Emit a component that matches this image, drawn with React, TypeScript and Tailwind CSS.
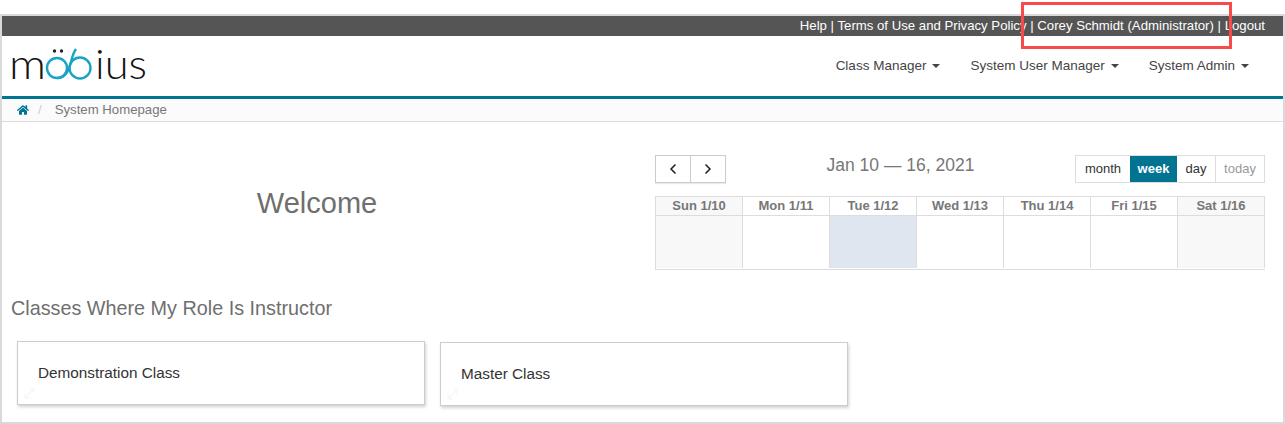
import { ChevronLeft, ChevronRight, MoveDiagonal } from "lucide-react";
import { FaHome } from "react-icons/fa";

const days = [
  { label: "Sun 1/10", cell: "bg-[#f8f8f8]", head: "bg-[#f8f8f8]" },
  { label: "Mon 1/11", cell: "bg-white", head: "bg-white" },
  { label: "Tue 1/12", cell: "bg-[#dfe6ef]", head: "bg-white" },
  { label: "Wed 1/13", cell: "bg-white", head: "bg-white" },
  { label: "Thu 1/14", cell: "bg-white", head: "bg-white" },
  { label: "Fri 1/15", cell: "bg-white", head: "bg-white" },
  { label: "Sat 1/16", cell: "bg-[#f8f8f8]", head: "bg-[#f8f8f8]" },
];

function Logo() {
  return (
    <svg width="143" height="60" viewBox="8 36 143 60" className="block">
      <text x="9" y="79" textLength="37" lengthAdjust="spacingAndGlyphs" fontFamily="Lato, sans-serif" fontWeight="300" fontSize="42" fill="#151515">m</text>
      <circle cx="54.500" cy="51" r="1.700" fill="#222" />
      <circle cx="61.500" cy="51" r="1.700" fill="#222" />
      <circle cx="57" cy="68" r="10" fill="none" stroke="#1ba3c6" strokeWidth="2.400" />
      <circle cx="80" cy="68" r="10.500" fill="none" stroke="#1ba3c6" strokeWidth="2.400" />
      <path d="M57 78C66 78 69 70 71 62C72 58 73 53 76 49" fill="none" stroke="#1ba3c6" strokeWidth="2.400" />
      <text x="95" y="79" textLength="52" lengthAdjust="spacingAndGlyphs" fontFamily="Lato, sans-serif" fontWeight="300" fontSize="42" fill="#151515">ius</text>
    </svg>
  );
}

function Caret() {
  return <span className="ml-[6px] inline-block border-x-[4.500px] border-t-[4.500px] border-x-transparent border-t-[#444] align-middle" />;
}

function ClassCard({ name, offset }: { name: string; offset: string }) {
  return (
    <div className={`relative h-[64px] w-[408px] border border-[#ccc] bg-white pl-[20px] pt-[21px] text-[15.300px] leading-[20px] text-[#333] shadow-[1px_2px_3px_rgba(0,0,0,0.18)] ${offset}`}>
      {name}
      <MoveDiagonal className="absolute bottom-[3px] left-[4px] h-[15px] w-[15px] text-[#f6f6f6]" />
    </div>
  );
}

export default function App() {
  return (
    <div className="relative h-[424px] w-[1285px] overflow-hidden bg-white pt-[14px] font-['Liberation_Sans',Arial,sans-serif]">
      <div className="h-[410px] border-2 border-[#d9d9d9] bg-white">
        <div className="flex h-[20px] items-center justify-end whitespace-pre bg-[#555] pr-[18px] text-[13.200px] leading-[20px] text-white">
          Help | Terms of Use and Privacy Policy | Corey Schmidt (Administrator) | Logout
        </div>
        <header className="flex h-[60px] items-center justify-between pl-[6px] pr-[34px]">
          <Logo />
          <nav className="flex gap-[30px] text-[13.500px] text-[#444]">
            <span>Class Manager<Caret /></span>
            <span>System User Manager<Caret /></span>
            <span>System Admin<Caret /></span>
          </nav>
        </header>
        <div className="flex h-[26px] items-center border-t-[3px] border-b border-t-[#007491] border-b-[#ddd] bg-[#fbfbfb] pl-[15px] text-[13.200px] text-[#777]">
          <FaHome className="h-[12px] w-[12px] text-[#007491]" />
          <span className="ml-[9px] text-[#ccc]">/</span>
          <span className="ml-[13px]">System Homepage</span>
        </div>

        <div className="flex pt-[33px]">
          <div className="flex w-[630px] justify-center pt-[30px]">
            <h1 className="text-[29px] leading-[36px] text-[#6f6f6f]">Welcome</h1>
          </div>
          <div className="ml-[23px] w-[610px]">
            <div className="flex h-[28px] items-start justify-between">
              <div className="flex h-[28px] w-[71px] border border-[#ccc] shadow-[0_1px_1px_rgba(0,0,0,0.08)]">
                <span className="flex flex-1 items-center justify-center border-r border-[#ccc]">
                  <ChevronLeft className="h-[16px] w-[16px] text-[#222]" strokeWidth={2.500} />
                </span>
                <span className="flex flex-1 items-center justify-center">
                  <ChevronRight className="h-[16px] w-[16px] text-[#222]" strokeWidth={2.500} />
                </span>
              </div>
              <div className="-mt-[2px] text-[17.500px] leading-[24px] text-[#777]">Jan 10 — 16, 2021</div>
              <div className="flex h-[28px] border border-[#ddd] text-[13px] leading-[26px] text-[#333]">
                <span className="w-[54px] text-center">month</span>
                <span className="w-[47px] bg-[#007491] text-center font-bold text-white">week</span>
                <span className="w-[39px] border-r border-[#ddd] text-center">day</span>
                <span className="w-[48px] text-center text-[#999]">today</span>
              </div>
            </div>
            <div className="mt-[13px] border-y border-l border-[#ddd]">
              <div className="grid h-[19px] grid-cols-[repeat(7,87px)] border-b border-[#ddd]">
                {days.map((d) => (
                  <div key={d.label} className={`border-r border-[#ddd] text-center text-[13px] font-bold leading-[17px] text-[#777] ${d.head}`}>
                    {d.label}
                  </div>
                ))}
              </div>
              <div className="grid h-[53px] grid-cols-[repeat(7,87px)] pb-px">
                {days.map((d) => (
                  <div key={d.label} className={`border-r border-[#ddd] ${d.cell}`} />
                ))}
              </div>
            </div>
          </div>
        </div>

        <h2 className="mt-[26px] pl-[9px] text-[19.800px] leading-[24px] text-[#6f6f6f]">Classes Where My Role Is Instructor</h2>
        <div className="mt-[21px] flex items-start gap-[15px] pl-[15px]">
          <ClassCard name="Demonstration Class" offset="" />
          <ClassCard name="Master Class" offset="mt-px" />
        </div>
      </div>
      <div className="pointer-events-none absolute left-[1021px] top-[2px] h-[47px] w-[211px] border-[3px] border-[#f94a4a]" />
    </div>
  );
}
